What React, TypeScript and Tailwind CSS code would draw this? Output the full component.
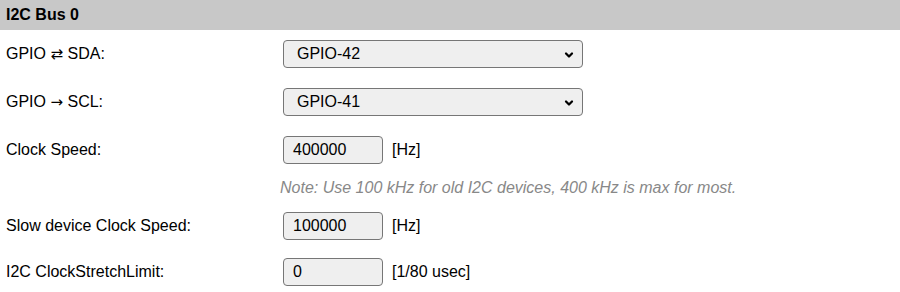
import type { ReactNode } from "react";
import { ChevronDown } from "lucide-react";

const labelCls = "w-[283px] shrink-0 pl-[6px] text-[16px] text-black";
const boxCls = "h-[28px] rounded-[4px] border border-[#767676] bg-[#efefef] text-[16px] text-black";

function Arrow({ children }: { children: ReactNode }) {
  return <span className="font-['DejaVu_Sans',sans-serif] text-[15px]">{children}</span>;
}

function SelectRow({ label, value }: { label: ReactNode; value: string }) {
  return (
    <div className="flex h-[28px] items-center">
      <div className={labelCls}>{label}</div>
      <div className={`${boxCls} relative flex w-[300px] items-center pl-[13px]`}>
        <span>{value}</span>
        <ChevronDown className="absolute right-[7px] top-[8px] h-[12px] w-[12px] text-black" strokeWidth={4.5} />
      </div>
    </div>
  );
}

function InputRow({ label, value, unit }: { label: string; value: string; unit: string }) {
  return (
    <div className="flex h-[28px] items-center">
      <div className={labelCls}>{label}</div>
      <div className={`${boxCls} flex w-[100px] items-center pl-[9px]`}>{value}</div>
      <span className="ml-[9px] text-[16px] text-black">{unit}</span>
    </div>
  );
}

export default function App() {
  return (
    <div className="h-[292px] w-[900px] bg-white font-['Liberation_Sans',Arial,sans-serif]">
      <div className="flex h-[30px] items-center bg-[#c8c8c8] pl-[6px] text-[16px] font-bold text-black">I2C Bus 0</div>
      <div className="mt-[10px]">
        <SelectRow label={<>GPIO <Arrow>⇄</Arrow> SDA:</>} value="GPIO-42" />
      </div>
      <div className="mt-[20px]">
        <SelectRow label={<>GPIO <Arrow>→</Arrow> SCL:</>} value="GPIO-41" />
      </div>
      <div className="mt-[20px]">
        <InputRow label="Clock Speed:" value="400000" unit="[Hz]" />
      </div>
      <div className="flex h-[48px] items-center pl-[280px] text-[16px] italic text-[#888888]">
        Note: Use 100 kHz for old I2C devices, 400 kHz is max for most.
      </div>
      <InputRow label="Slow device Clock Speed:" value="100000" unit="[Hz]" />
      <div className="mt-[18px]">
        <InputRow label="I2C ClockStretchLimit:" value="0" unit="[1/80 usec]" />
      </div>
    </div>
  );
}
